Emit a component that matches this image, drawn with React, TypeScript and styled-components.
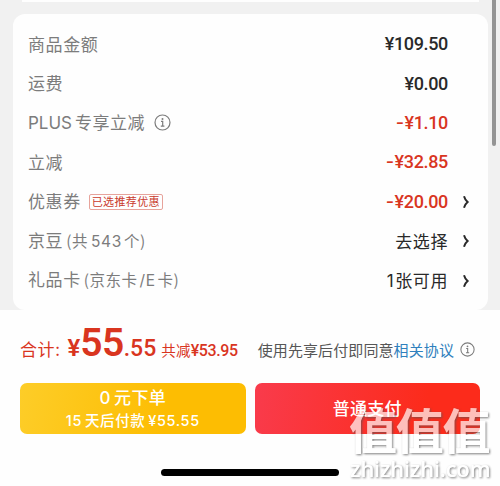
import React from 'react';
import styled, { createGlobalStyle } from 'styled-components';

const GlobalStyle = createGlobalStyle`
  * { box-sizing: border-box; }
  body { margin: 0; background: #fefefe; overflow: hidden; }
`;

const cjk = `"Noto Sans CJK SC", sans-serif`;
const RED = '#d9351f';

const Page = styled.main`
  position: relative;
  width: 500px;
  height: 486px;
  overflow: hidden;
  background: #fefefe;
  font-family: ${cjk};
  display: flex;
  flex-direction: column;
`;

const Scroller = styled.section`
  height: 310px;
  flex: none;
  background: #f1f1f1;
  padding: 0 12px 0 13px;
  display: flex;
  flex-direction: column;
  gap: 12px;
`;

const CardEnd = styled.div`
  height: 2px;
  margin: 0 9px;
  background: #fefefe;
`;

const Card = styled.div`
  height: 296px;
  border-radius: 12px;
  background: #fefefe;
  padding: 10.5px 16px 0 15px;
`;

const Row = styled.div`
  height: 39.4px;
  display: flex;
  align-items: center;
`;

const Label = styled.span`
  color: #7c7c7c;
  font-size: 17px;
  letter-spacing: 0.6px;
  line-height: 24px;
  padding-bottom: 1px;
  white-space: nowrap;
  display: flex;
  align-items: baseline;
`;

const Piece = styled.span<{ $size?: number; $track?: number; $gap?: number; $latin?: boolean }>`
  font-size: ${p => p.$size ?? 17}px;
  letter-spacing: ${p => p.$track ?? 0.5}px;
  margin-left: ${p => p.$gap ?? 0}px;
  font-family: ${p => (p.$latin ? `Inter, ${cjk}` : cjk)};
`;

const AmountText = styled.span<{ $red?: boolean; $shift?: number }>`
  margin-left: auto;
  margin-right: ${p => 24 + (p.$shift ?? 0)}px;
  font: 500 18px/24px Roboto, ${cjk};
  letter-spacing: -0.35px;
  color: ${p => (p.$red ? RED : '#292929')};
`;

const Minus = styled.span`
  font-family: Inter, sans-serif;
  letter-spacing: 0.5px;
`;

const Choice = styled.span`
  margin-left: auto;
  margin-right: 24px;
  padding-bottom: 1px;
  font-size: 17px;
  line-height: 24px;
  letter-spacing: 0.6px;
  color: #292929;
`;

const Tag = styled.span`
  width: 74px;
  height: 16px;
  margin-left: 8px;
  border: 1px solid #e7a39b;
  border-radius: 2px;
  color: #c93a2c;
  font-size: 11px;
  line-height: 13px;
  letter-spacing: 0.35px;
  text-align: center;
  white-space: nowrap;
`;

const ChevronSvg = styled.svg`
  width: 8px;
  height: 14px;
  margin: 0 2px 0 -10px;
`;

const InfoSvg = styled.svg<{ $gap: number }>`
  flex: none;
  margin-left: ${p => p.$gap}px;
`;

const Scrollbar = styled.div`
  position: absolute;
  left: 492px;
  top: -8px;
  width: 4px;
  height: 154px;
  border-radius: 2px;
  background: #949494;
`;

const Summary = styled.div`
  height: 73px;
  flex: none;
  padding: 0 25px 0 20px;
  display: flex;
  justify-content: space-between;
`;

const Total = styled.div`
  display: flex;
  align-items: baseline;
  color: ${RED};
  height: 60px;
  line-height: 60px;
  padding-top: 3px;
  white-space: nowrap;
`;

const Figure = styled.span<{ $size: number; $weight?: number; $track?: number; $gap?: number }>`
  font-family: Roboto, ${cjk};
  font-size: ${p => p.$size}px;
  font-weight: ${p => p.$weight ?? 500};
  letter-spacing: ${p => p.$track ?? 0}px;
  margin-left: ${p => p.$gap ?? 0}px;
`;

const Terms = styled.div`
  display: flex;
  align-items: center;
  height: 79px;
  font-size: 15px;
  letter-spacing: 0.1px;
  color: #565656;
  white-space: nowrap;
`;

const Link = styled.span`
  color: #2f80bd;
`;

const Actions = styled.div`
  display: flex;
  gap: 9px;
  padding: 0 20px;
`;

const Button = styled.button<{ $kind: 'later' | 'now' }>`
  width: 225.5px;
  height: 51px;
  padding: 2px 0 0;
  border: 0;
  border-radius: 7px;
  color: #fff;
  font-family: Inter, ${cjk};
  display: flex;
  flex-direction: column;
  align-items: center;
  justify-content: center;
  background: ${p =>
    p.$kind === 'later'
      ? 'linear-gradient(100deg, #fdcd28, #fdbd02 65%)'
      : 'linear-gradient(100deg, #f93b4c, #fc2b1b 75%)'};
`;

const ButtonTitle = styled.span`
  font-size: 17px;
  font-weight: 500;
  line-height: 23px;
  letter-spacing: 0.3px;
  word-spacing: -1.5px;
`;

const ButtonNote = styled.span`
  font-size: 14.5px;
  font-weight: 500;
  line-height: 22px;
  letter-spacing: 0.6px;
  word-spacing: -1.5px;
  white-space: nowrap;
`;

const HomeBar = styled.div`
  position: absolute;
  left: 161px;
  top: 469px;
  width: 178px;
  height: 7px;
  border-radius: 4px;
  background: #000;
`;

const Watermark = styled.div`
  position: absolute;
  left: 349px;
  top: 402px;
  width: 148px;
  color: #fff;
  filter: url(#emboss);
  white-space: nowrap;
`;

const MarkName = styled.div`
  font-size: 48px;
  font-weight: 700;
  line-height: 52px;
  letter-spacing: -1.2px;
`;

const MarkSite = styled.div`
  padding-left: 1px;
  font: 500 22px/28px "Noto Sans", sans-serif;
  letter-spacing: -0.1px;
`;

const HiddenDefs = styled.svg`
  position: absolute;
`;

const Chevron = () => (
  <ChevronSvg viewBox="0 0 8 14">
    <path d="M2 1.2 C3 4.6 4.4 6 5.6 7 C4.4 8 3 9.4 2 12.8" fill="none" stroke="#292929" strokeWidth="2" />
  </ChevronSvg>
);

const Info = ({ size, gap }: { size: number; gap: number }) => (
  <InfoSvg $gap={gap} width={size} height={size} viewBox="0 0 17 17" fill="none" stroke="#7c7c7c">
    <circle cx="8.5" cy="8.5" r="7.5" strokeWidth="1.2" />
    <path d="M7 7.4h1.7v4.6M6.8 12.2h3.6" strokeWidth="1.2" />
    <circle cx="8.5" cy="4.9" r="1" fill="#7c7c7c" stroke="none" />
  </InfoSvg>
);

const Amount = ({ value, off, shift }: { value: string; off?: boolean; shift?: number }) => (
  <AmountText $red={off} $shift={shift}>
    {off && <Minus>-</Minus>}¥{value}
  </AmountText>
);

export default function App() {
  return (
    <>
      <GlobalStyle />
      <Page>
        <Scroller>
          <CardEnd />
          <Card>
            <Row><Label>商品金额</Label><Amount value="109.50" /></Row>
            <Row><Label>运费</Label><Amount value="0.00" /></Row>
            <Row>
              <Label>
                <Piece $latin $track={0}>PLUS</Piece>
                <Piece $gap={3}>专享立减</Piece>
              </Label>
              <Info size={17} gap={9} />
              <Amount off value="1.10" />
            </Row>
            <Row><Label>立减</Label><Amount off value="32.85" /></Row>
            <Row>
              <Label>优惠券</Label>
              <Tag>已选推荐优惠</Tag>
              <Amount off value="20.00" />
              <Chevron />
            </Row>
            <Row>
              <Label>
                京豆
                <Piece $size={15.5} $gap={3}>(共</Piece>
                <Piece $size={15.5} $latin $gap={3} $track={0.7}>543</Piece>
                <Piece $size={15.5} $gap={2}>个)</Piece>
              </Label>
              <Choice>去选择</Choice>
              <Chevron />
            </Row>
            <Row>
              <Label>
                礼品卡
                <Piece $size={15.5} $gap={3}>(京东卡</Piece>
                <Piece $size={15.5} $latin $gap={2}>/E</Piece>
                <Piece $size={15.5} $gap={2}>卡)</Piece>
              </Label>
              <Choice><Piece $latin $track={1.5}>1</Piece>张可用</Choice>
              <Chevron />
            </Row>
          </Card>
        </Scroller>
        <Summary>
          <Total>
            <Piece $size={17} $track={0.6}>合计:</Piece>
            <Figure $size={24} $gap={7} $weight={600}>¥</Figure>
            <Figure $size={39} $weight={600} $track={-0.6}>55</Figure>
            <Figure $size={23}>.55</Figure>
            <Figure $size={14.5} $gap={5} $track={0.2} $weight={400}>共减</Figure>
            <Figure $size={16} $weight={500} $track={-0.4}>¥53.95</Figure>
          </Total>
          <Terms>
            使用先享后付即同意<Link>相关协议</Link>
            <Info size={15} gap={6} />
          </Terms>
        </Summary>
        <Actions>
          <Button $kind="later">
            <ButtonTitle>0 元下单</ButtonTitle>
            <ButtonNote>15 天后付款 ¥55.55</ButtonNote>
          </Button>
          <Button $kind="now"><ButtonTitle>普通支付</ButtonTitle></Button>
        </Actions>
        <Scrollbar />
        <HomeBar />
        <HiddenDefs width="0" height="0">
          <filter id="emboss" x="-5%" y="-5%" width="115%" height="115%" colorInterpolationFilters="sRGB">
            <feGaussianBlur in="SourceAlpha" stdDeviation="0.8" />
            <feOffset dx="1.3" dy="1.3" result="cast" />
            <feFlood floodColor="#555" floodOpacity="0.75" />
            <feComposite in2="cast" operator="in" />
            <feComposite in2="SourceAlpha" operator="out" result="edge" />
            <feComponentTransfer in="SourceGraphic" result="face">
              <feFuncA type="linear" slope="0.7" />
            </feComponentTransfer>
            <feMerge>
              <feMergeNode in="edge" />
              <feMergeNode in="face" />
            </feMerge>
          </filter>
        </HiddenDefs>
        <Watermark>
          <MarkName>值值值</MarkName>
          <MarkSite>zhizhizhi.com</MarkSite>
        </Watermark>
      </Page>
    </>
  );
}
